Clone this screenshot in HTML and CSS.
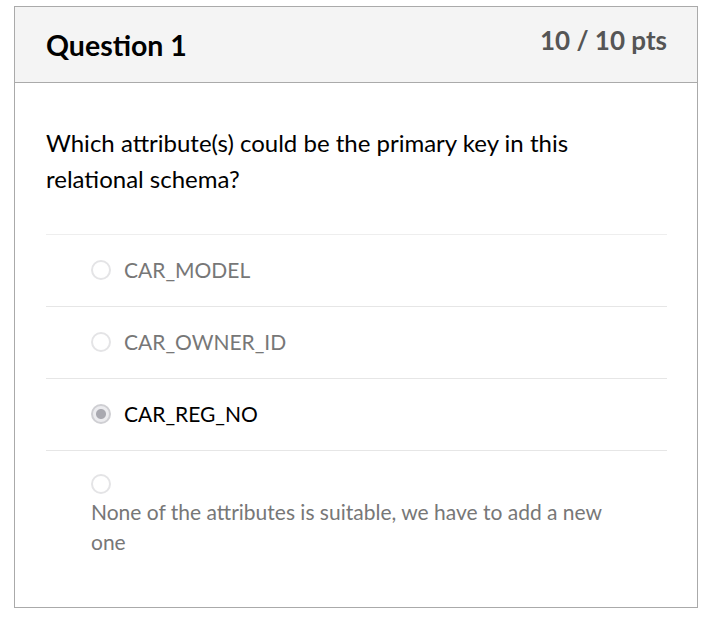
FILE: index.html
```html
<!DOCTYPE html>
<html lang="en">
<head>
<meta charset="utf-8">
<title>Question 1</title>
<link rel="stylesheet" href="styles.css">
</head>
<body>
<div class="card">
  <div class="header">
    <h2 class="title">Question 1</h2>
    <div class="pts">10 / 10 pts</div>
  </div>
  <div class="body">
    <p class="question">Which attribute(s) could be the primary key in this relational schema?</p>
    <div class="answers">
      <div class="answer"><span class="radio"></span><span class="label">CAR_MODEL</span></div>
      <div class="answer"><span class="radio"></span><span class="label">CAR_OWNER_ID</span></div>
      <div class="answer selected"><span class="radio"></span><span class="label">CAR_REG_NO</span></div>
      <div class="answer stacked"><span class="radio"></span><span class="label">None of the attributes is suitable, we have to add a new one</span></div>
    </div>
  </div>
</div>
</body>
</html>
```
FILE: styles.css
```css
* { box-sizing: border-box; }
body {
  margin: 0;
  padding: 6px 20px 0 14px;
  background: #fff;
  font-family: Lato, "Open Sans", sans-serif;
  color: #000;
}
.card {
  width: 684px;
  height: 602px;
  border: 1px solid #aaa;
}
.header {
  height: 76px;
  background: #f4f4f4;
  border-bottom: 1px solid #aaa;
  display: flex;
  justify-content: space-between;
  align-items: flex-start;
  padding: 0 30px 0 31px;
}
.title {
  margin: 18px 0 0;
  font-size: 28.5px;
  font-weight: 700;
  line-height: 40px;
  color: #000;
}
.pts {
  margin-top: 15px;
  font-size: 26px;
  font-weight: 700;
  line-height: 36px;
  color: #555;
}
.body {
  padding: 42px 30px 0 31px;
}
.question {
  margin: 0 0 37px;
  font-size: 24px;
  line-height: 36px;
  width: 580px;
}
.answers {
  border-top: 1px solid #eee;
}
.answer {
  display: flex;
  align-items: center;
  gap: 13px;
  height: 72px;
  padding-left: 45px;
  padding-bottom: 2px;
  border-bottom: 1px solid #e6e6e6;
  font-size: 21px;
  color: #777;
}
.answer.selected { color: #000; }
.radio {
  width: 20px;
  height: 20px;
  border-radius: 50%;
  border: 2px solid #e4e4e6;
  background: #fff;
  flex: none;
}
.selected .radio {
  border-color: #cfcfd3;
  background: radial-gradient(circle, #a9a9b0 0 4.5px, #ececef 5.5px);
}
.answer.stacked {
  flex-direction: column;
  align-items: flex-start;
  gap: 3px;
  height: auto;
  padding-top: 23px;
  border-bottom: none;
  line-height: 30px;
}
.stacked .label { width: 525px; }
```
